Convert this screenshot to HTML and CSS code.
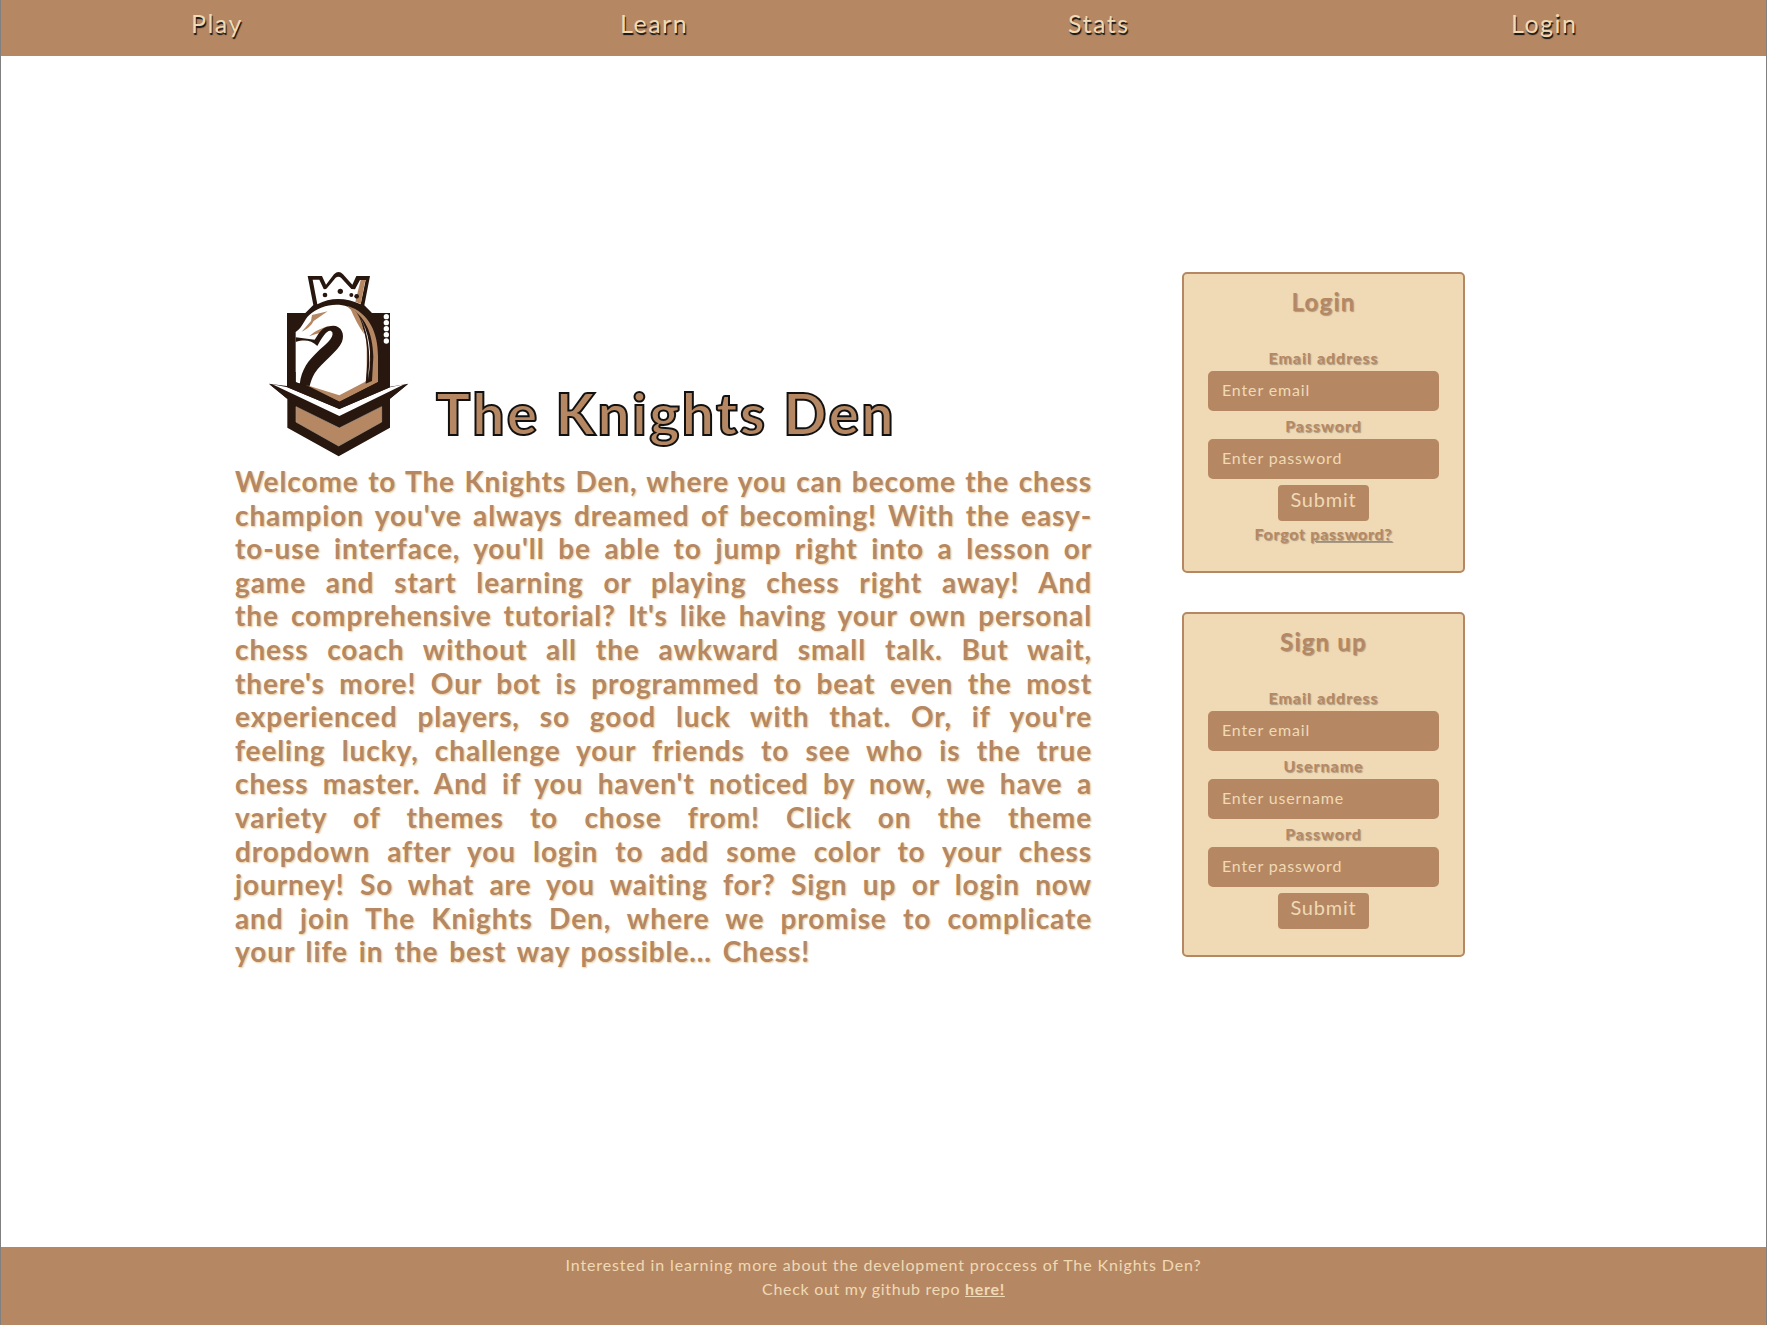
FILE: index.html
```html
<!DOCTYPE html>
<html lang="en">
<head>
<meta charset="utf-8">
<title>The Knights Den</title>
<link rel="stylesheet" href="styles.css">
</head>
<body>
<nav class="nav">
  <a class="play">Play</a><a class="learn">Learn</a><a class="stats">Stats</a><a class="log">Login</a>
</nav>
<main class="main">
  <section class="intro">
    <header class="brand">
      <svg class="logo" viewBox="0 0 510 600" width="170" height="200">
        <path fill="#28170f" d="M158 42h43l12 26 24-31q14-14 27 0l28 31 12-26h41l-17 88 23 23h54v221l55-9-55 45v87l-154 86-154-86v-86l-55-46 54 7V153h55l24-24z"/>
        <path fill="#fff" d="M173 53h20l13 28q6 2 11-4l25-30q8-5 16 0l31 34 11 1 15-28h17l-15 73q-70-32-130 0z"/>
        <path fill="#b58863" d="M317 54h14l-14 72-16-7z"/>
        <g fill="#28170f"><circle cx="210" cy="99" r="7"/><circle cx="256" cy="88" r="8"/><circle cx="289" cy="99" r="6"/><circle cx="305" cy="103" r="7"/></g>
        <path fill="#b58863" d="M278 132c65 20 91 81 91 151v77l-115 59-94-47 34-30 148 18z"/>
        <path fill="#fff" d="M122 210c23-15 23-35 41-51 29-27 78-39 115-25 48 29 60 92 57 154v69l-82 43-87-27-44-12z"/>
        <path fill="#28170f" d="M278 134c52 26 75 77 77 150l-4 73-19 8c9-88 9-151-25-195-8-17-17-28-29-36z"/>
        <path fill="#fff" d="M310 155c28 47 33 100 33 146l-4 51c15-80 4-142-29-197z"/>
        <path fill="#b58863" d="M304 151l-20-16c14 34 29 61 43 81-3-28-11-48-23-65zM218 148l-47 11-3 18-28 32c17-8 28-17 36-32zM162 223l31-10 29-22c-19 7-39 12-60 32z"/>
        <path fill="#28170f" d="M122 226l57 7c11-15 20-42 55-42 25 0 36 25 27 48-12 30-60 60-82 95-8 13-11 24-15 38l-30-4c5-47 27-73 53-98 22-21 51-41 45-59-9-16-28 8-45 41-19-17-37-20-65-12z"/>
        <path fill="#fff" d="M52 367l45 9 156 65 152-65 43-9-195 95z"/>
        <path fill="#28170f" d="M97 376l156 65 152-65v-50l-36 35-116 58-131-59v-30H97z"/>
        <path fill="#28170f" d="M42 366l55 26v18zM459 366l-54 25v19z"/>
        <path fill="#b58863" stroke="#a99b8f" stroke-width="2" d="M123 434l130 64 127-64v46l-129 72-128-72z"/>
        <g fill="#fff"><circle cx="394" cy="164" r="8"/><circle cx="394" cy="182" r="8"/><circle cx="394" cy="200" r="8"/><circle cx="394" cy="218" r="8"/><circle cx="394" cy="237" r="8"/></g>
      </svg>
      <h1 class="title">The Knights Den</h1>
    </header>
    <p class="welcome">
      <span>Welcome to The Knights Den, where you can become the chess</span>
      <span>champion you've always dreamed of becoming! With the easy-</span>
      <span>to-use interface, you'll be able to jump right into a lesson or</span>
      <span>game and start learning or playing chess right away! And</span>
      <span>the comprehensive tutorial? It's like having your own personal</span>
      <span>chess coach without all the awkward small talk. But wait,</span>
      <span>there's more! Our bot is programmed to beat even the most</span>
      <span>experienced players, so good luck with that. Or, if you're</span>
      <span>feeling lucky, challenge your friends to see who is the true</span>
      <span>chess master. And if you haven't noticed by now, we have a</span>
      <span>variety of themes to chose from! Click on the theme</span>
      <span>dropdown after you login to add some color to your chess</span>
      <span>journey! So what are you waiting for? Sign up or login now</span>
      <span>and join The Knights Den, where we promise to complicate</span>
      <span class="last">your life in the best way possible... Chess!</span>
    </p>
  </section>
  <aside class="forms">
    <form class="card">
      <h2>Login</h2>
      <label>Email address</label><input placeholder="Enter email">
      <label>Password</label><input placeholder="Enter password">
      <button type="button">Submit</button>
      <div class="forgot">Forgot <u>password?</u></div>
    </form>
    <form class="card signup">
      <h2>Sign up</h2>
      <label>Email address</label><input placeholder="Enter email">
      <label>Username</label><input placeholder="Enter username">
      <label>Password</label><input placeholder="Enter password">
      <button type="button">Submit</button>
    </form>
  </aside>
</main>
<footer class="footer">
  <div class="ask">Interested in learning more about the development proccess of The Knights Den?</div>
  <div class="repo">Check out my github repo <b>here!</b></div>
</footer>
</body>
</html>
```
FILE: styles.css
```css
* { box-sizing: border-box; }
body {
  margin: 0;
  height: 1325px;
  display: flex;
  flex-direction: column;
  border: solid #808080;
  border-width: 0 1px;
  background: #fff;
  color: #b58863;
  font-family: Lato, sans-serif;
  overflow: hidden;
}
.nav {
  height: 56px;
  display: flex;
  justify-content: space-around;
  background: #b58863;
  color: #f0d9b5;
  font-size: 25px;
  line-height: 46px;
  text-shadow: 1px 2px 1px #111;
}
.nav a { white-space: nowrap; letter-spacing: 1.5px; }
.play { width: 49px; }
.learn { width: 68px; }
.stats { width: 63px; }
.log { width: 65px; }
.main { flex: 1; display: flex; align-items: flex-start; padding-left: 234px; }
.intro { width: 857px; padding-top: 206px; }
.brand { height: 203px; display: flex; align-items: flex-start; padding-left: 20px; }
.logo { flex: none; }
.title {
  margin: 116px 0 0 11px;
  font-size: 57px;
  line-height: 70px;
  font-weight: 900;
  white-space: nowrap;
  letter-spacing: 2.3px;
  -webkit-text-stroke: 2px #111;
}
.welcome {
  margin: 0;
  font-size: 28px;
  line-height: 33.6px;
  font-weight: 700;
  letter-spacing: .9px;
  text-shadow: 1px 1px 2px #f0d9b5, 1px 1px 1px #f0d9b5;
}
.welcome span { display: block; white-space: nowrap; text-align-last: justify; }
.welcome .last { width: 575px; }
.forms { margin-left: 90px; padding-top: 216px; display: flex; flex-direction: column; gap: 39px; }
.card {
  width: 283px;
  height: 301px;
  padding: 14px 24px;
  border: 2px solid #b58863;
  border-radius: 5px;
  background: #f0d9b5;
  display: flex;
  flex-direction: column;
  align-items: center;
  font-weight: 700;
  text-shadow: 1px 1px 1px rgba(100, 90, 80, .5);
}
.signup { height: 345px; }
.card h2 { margin: 0 0 31px; font-size: 24px; line-height: 28px; letter-spacing: 1.2px; }
.card label { font-size: 16px; line-height: 22px; height: 24px; letter-spacing: 1px; }
.card input {
  width: 231px;
  height: 40px;
  flex: none;
  margin-bottom: 4px;
  padding: 0 12px 4px;
  border: 2px solid #b58863;
  border-radius: 5px;
  background: #b58863;
  font: 16px Lato, sans-serif;
  letter-spacing: .85px;
}
.card input::placeholder { color: #f0d9b5; }
.card button {
  width: 91px;
  height: 36px;
  flex: none;
  margin: 2px 0 0;
  padding: 0 0 9px;
  border: 0;
  border-radius: 4px;
  background: #b58863;
  color: #f0d9b5;
  font: 20px Lato, sans-serif;
  letter-spacing: .8px;
}
.forgot { font-size: 16px; line-height: 25px; letter-spacing: .75px; }
.footer {
  height: 78px;
  padding-top: 6px;
  background: #b58863;
  color: #f0d9b5;
  text-align: center;
  font-size: 16px;
  line-height: 24px;
  letter-spacing: .88px;
}
.repo { letter-spacing: .7px; }
.footer b { text-decoration: underline; }
```
